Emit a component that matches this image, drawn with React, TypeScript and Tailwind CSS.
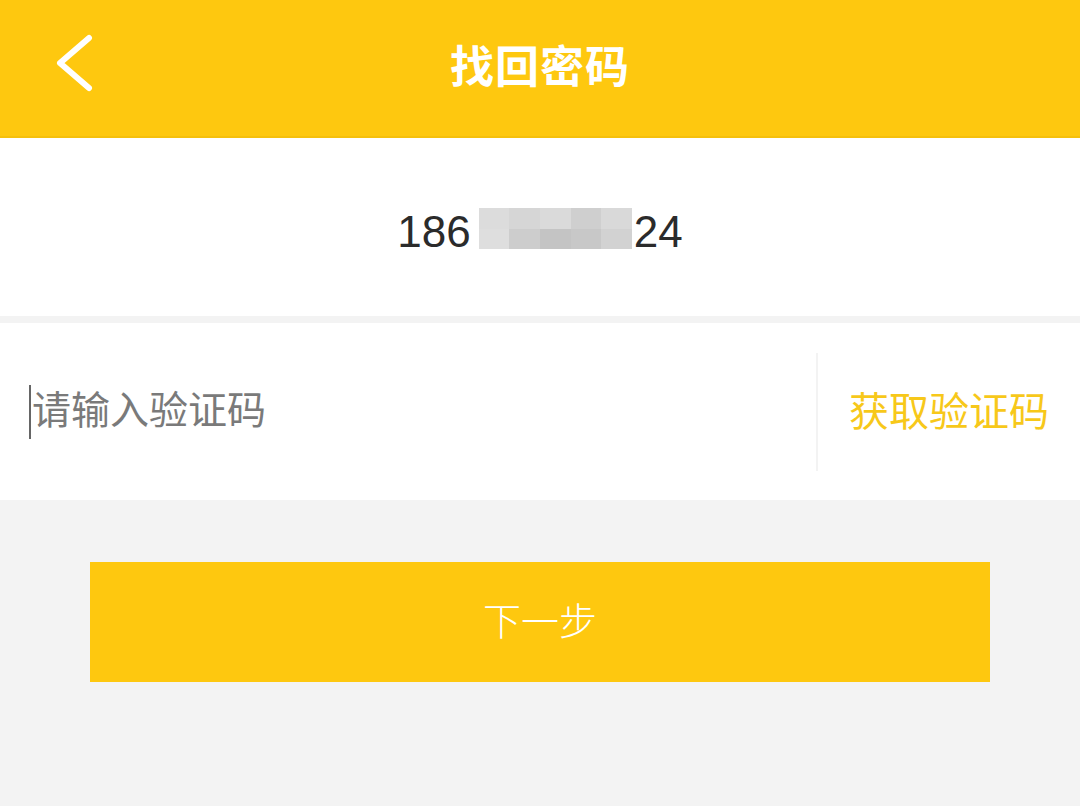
import React, { useState } from "react";

const cjk = { fontFamily: '"Liberation Sans", "Noto Sans CJK SC", sans-serif' };

const Mosaic = () => (
  <div className="grid h-[41px] w-[153px] grid-cols-5 grid-rows-2">
    <div className="bg-[#dcdcdc]" />
    <div className="bg-[#d6d6d6]" />
    <div className="bg-[#dadada]" />
    <div className="bg-[#cfcfcf]" />
    <div className="bg-[#d9d9d9]" />
    <div className="bg-[#dedede]" />
    <div className="bg-[#cdcdcd]" />
    <div className="bg-[#c4c4c4]" />
    <div className="bg-[#c8c8c8]" />
    <div className="bg-[#d2d2d2]" />
  </div>
);

const App = () => {
  const [code, setCode] = useState<string>("");
  return (
    <div className="flex min-h-[806px] w-[1080px] flex-col bg-[#f3f3f3]" style={cjk}>
      <header className="relative flex h-[138px] items-center justify-center border-b-2 border-[#f5c00c] bg-[#fec80f]">
        <button className="absolute left-[56px] top-[34px]">
          <svg width="40" height="58" viewBox="0 0 40 58" fill="none" className="block">
            <path d="M33 4 L4 29 L33 54" stroke="#ffffff" strokeWidth="6" strokeLinecap="round" strokeLinejoin="round" />
          </svg>
        </button>
        <h1 className="text-[44px] font-bold tracking-[1px] text-white">找回密码</h1>
      </header>

      <div className="flex h-[178px] items-center justify-center bg-white pt-[9px]">
        <span className="text-[44px] text-[#2b2b2b]">186</span>
        <div className="ml-[8px] mr-[2px] mb-[6px]">
          <Mosaic />
        </div>
        <span className="text-[44px] text-[#2b2b2b]">24</span>
      </div>

      <div className="mt-[7px] flex h-[177px] items-center bg-white">
        <input
          value={code}
          onChange={(e) => setCode(e.target.value)}
          placeholder="请输入验证码"
          className="ml-[29px] h-[54px] flex-1 border-l-[2px] border-[#666] pl-[1px] text-[39px] text-[#333] outline-none placeholder:text-[#7a7a7a]"
        />
        <div className="h-[118px] w-[2px] bg-[#f3f3f3]" />
        <button className="w-[262px] pl-[31px] text-left text-[40px] text-[#f7c81a]">获取验证码</button>
      </div>

      <button className="mx-[90px] mt-[62px] flex h-[120px] items-center justify-center bg-[#fec80f] text-[38px] font-light text-white">
        下一步
      </button>
    </div>
  );
};

export default App;
